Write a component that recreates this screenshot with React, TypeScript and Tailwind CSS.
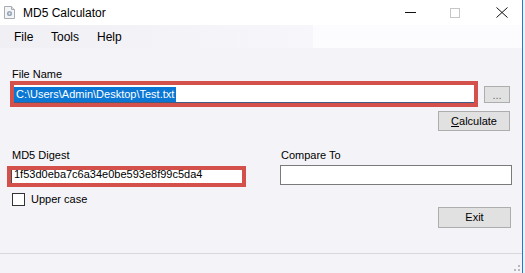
import React from "react";

function AppIcon() {
  return (
    <svg width="11" height="13" viewBox="0 0 11 13">
      <path d="M0.5 0.5 H7.5 L10.5 3.5 V12.5 H0.5 Z" fill="#f4f5f7" stroke="#a9adb3" />
      <path d="M7.5 0.5 V3.5 H10.5" fill="#dde0e4" stroke="#a9adb3" />
      <circle cx="5.5" cy="7.5" r="2.6" fill="#9aa8ba" />
      <circle cx="5.5" cy="7.5" r="1" fill="#e6ebf2" />
    </svg>
  );
}

function Btn({ children, className }: { children: React.ReactNode; className: string }) {
  return (
    <div
      className={
        "bg-[#e1e1e1] border border-[#adadad] text-black text-[11px] leading-none flex items-center justify-center " +
        className
      }
    >
      {children}
    </div>
  );
}

export default function App() {
  return (
    <div className="w-[525px] h-[273px] overflow-hidden flex bg-[#f3f3f5] font-['Liberation_Sans',Arial,sans-serif] text-black">
      <div className="w-[523px] h-full flex flex-col border-r border-[#1f7bd2] bg-[#f4f3f7]">
        {/* Title bar */}
        <div className="h-[25px] bg-white flex items-center shrink-0">
          <div className="ml-[4px] flex items-center">
            <AppIcon />
          </div>
          <span className="ml-[8px] text-[12px] leading-[24px]">MD5 Calculator</span>
          <div className="ml-auto flex items-center mr-[14px]">
            <svg width="11" height="10" viewBox="0 0 11 10">
              <line x1="0" y1="4.5" x2="11" y2="4.5" stroke="#111" strokeWidth="1" />
            </svg>
            <svg className="ml-[34px]" width="10" height="10" viewBox="0 0 10 10">
              <rect x="0.5" y="0.5" width="9" height="9" fill="none" stroke="#c6c6c6" />
            </svg>
            <svg className="ml-[36px]" width="12" height="11" viewBox="0 0 12 11">
              <path d="M0.5 0.5 L11.5 10.5 M11.5 0.5 L0.5 10.5" stroke="#111" strokeWidth="1" />
            </svg>
          </div>
        </div>

        {/* Menu bar */}
        <div className="h-[23px] flex shrink-0 text-[12px]">
          <div className="w-[313px] h-full flex items-center bg-linear-to-r from-[#f0eff4] to-[#f7f6fa]">
            <span className="ml-[14px] w-[37px]">File</span>
            <span className="w-[46px]">Tools</span>
            <span>Help</span>
          </div>
          <div className="flex-1 h-full bg-[#fcfcfe]" />
        </div>

        {/* Body */}
        <div className="flex-1 flex flex-col pt-[20px] text-[11px] leading-[13px]">
          <div className="ml-[12px] h-[13px]">File Name</div>
          <div className="flex items-center">
            <div className="ml-[10px] w-[468px] h-[26px] border-4 border-[#d3514a] bg-white">
              <div className="h-full border-b border-[#3f5d84] pt-[2px]">
                <span className="inline-block bg-[#0a77d4] text-white h-[15px] leading-[15px] px-[2px]">
                  {"C:\\Users\\Admin\\Desktop\\Test.txt"}
                </span>
              </div>
            </div>
            <Btn className="ml-[6px] w-[26px] h-[17px]">
              <span className="text-[#6b6b6b] pt-[3px]">...</span>
            </Btn>
          </div>
          <Btn className="mt-[4px] ml-[438px] w-[72px] h-[20px]">
            <span>
              <span className="underline">C</span>alculate
            </span>
          </Btn>

          <div className="flex mt-[18px]">
            <div className="ml-[7px] w-[239px] flex flex-col">
              <div className="pl-[5px] h-[13px]">MD5 Digest</div>
              <div className="mt-[4px] h-[21px] border-4 border-[#d3514a] bg-white">
                <div className="h-full border-l border-[#4a4a4a] pl-[2px] leading-[9px]">
                  1f53d0eba7c6a34e0be593e8f99c5da4
                </div>
              </div>
              <div className="mt-[6px] h-[13px] flex items-center pl-[5px]">
                <div className="w-[13px] h-[13px] border border-[#333333] bg-white" />
                <span className="ml-[6px]">Upper case</span>
              </div>
            </div>
            <div className="ml-[34px] w-[232px] flex flex-col">
              <div className="pl-[1px] h-[13px]">Compare To</div>
              <div className="mt-[3px] h-[20px] border border-[#7a7a7a] bg-white" />
              <Btn className="mt-[22px] ml-[158px] w-[73px] h-[21px]">Exit</Btn>
            </div>
          </div>
        </div>

        {/* Status bar */}
        <div className="h-[20px] shrink-0 border-t border-[#d9d9db] flex justify-end items-end">
          <svg className="mr-[1px]" width="12" height="10" viewBox="0 0 12 10">
            <rect x="9" y="2" width="2" height="2" fill="#b9b9bd" />
            <rect x="5" y="6" width="2" height="2" fill="#b9b9bd" />
            <rect x="9" y="6" width="2" height="2" fill="#b9b9bd" />
            <rect x="1" y="10" width="2" height="2" fill="#b9b9bd" />
          </svg>
        </div>
      </div>
      <div className="flex-1 h-full bg-[#eef0f3]" />
    </div>
  );
}
